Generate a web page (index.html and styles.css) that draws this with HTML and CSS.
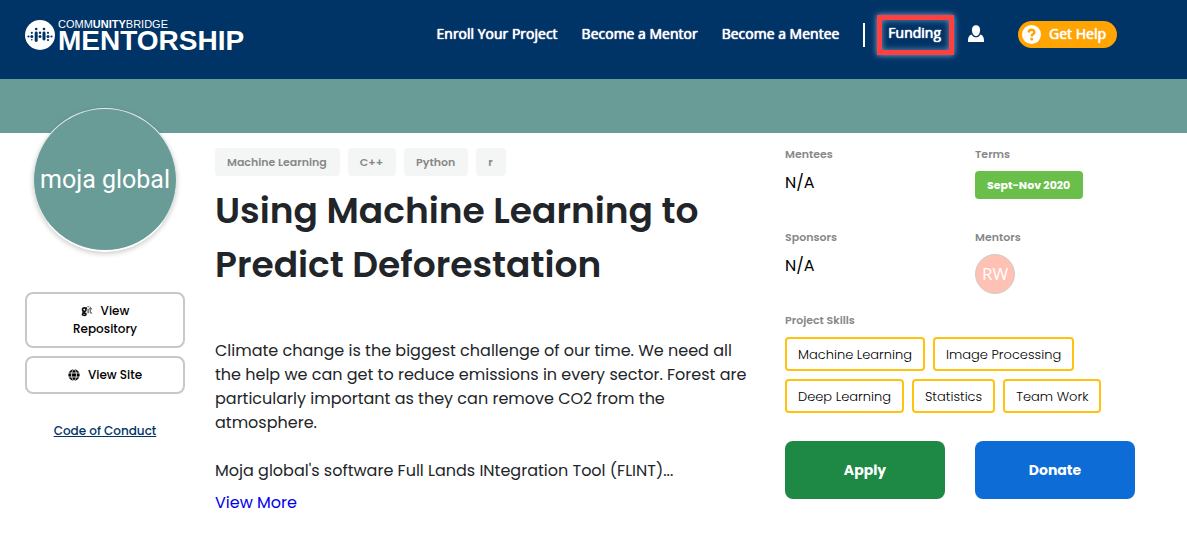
FILE: index.html
```html
<!DOCTYPE html>
<html lang="en">
<head>
<meta charset="utf-8">
<meta name="viewport" content="width=device-width, initial-scale=1">
<title>CommunityBridge Mentorship</title>
<link rel="stylesheet" href="styles.css">
</head>
<body>
<header class="topbar">
  <a class="brand" href="#">
    <svg class="brand-mark" viewBox="0 0 30 30" aria-hidden="true">
      <circle cx="15" cy="15" r="15" fill="#fff"/>
      <g fill="#003366">
        <circle cx="3.5" cy="16.5" r="1.1"/><circle cx="6.8" cy="16.5" r="1.5"/><circle cx="6.8" cy="12.8" r="1.1"/><circle cx="6.8" cy="19.8" r="0.8"/>
        <rect x="9.700" y="11.500" width="3" height="10.500" rx="1.400"/><circle cx="11.200" cy="9" r="1.300"/>
        <circle cx="15" cy="16.500" r="1.500"/><circle cx="15" cy="12.800" r="1.200"/>
        <rect x="17.500" y="11.500" width="3" height="9" rx="1.400"/><circle cx="19" cy="9" r="1.300"/>
        <circle cx="23" cy="16.500" r="1.500"/><circle cx="23" cy="12.800" r="1.100"/><circle cx="23" cy="20" r="1.100"/>
        <circle cx="26.500" cy="16.500" r="1.100"/>
      </g>
    </svg>
    <span class="brand-text">
      <span class="brand-top">COMM<b>UNITY</b>BRIDGE</span>
      <span class="brand-name">MENTORSHIP</span>
    </span>
  </a>
  <nav class="nav">
    <a class="nav-link" href="#">Enroll Your Project</a>
    <a class="nav-link" href="#">Become a Mentor</a>
    <a class="nav-link" href="#">Become a Mentee</a>
    <span class="divider"></span>
    <a class="nav-link funding" href="#">Funding</a>
    <a class="user" href="#" aria-label="Account">
      <svg viewBox="0 0 16 18" fill="#fff" aria-hidden="true">
        <path d="M8 0.200C10.600 0.200 12.100 2.100 12.100 4.900C12.100 7.900 10.300 11 8 11C5.700 11 3.900 7.900 3.900 4.900C3.900 2.100 5.400 0.200 8 0.200Z"/>
        <path d="M3.600 9.500C4.700 11.500 6.200 12.300 8 12.300S11.300 11.500 12.400 9.500C15 10.300 16 12.500 16 15.500V17H0V15.500C0 12.500 1 10.300 3.600 9.500Z"/>
      </svg>
    </a>
    <button class="help" type="button">
      <svg viewBox="0 0 19 19" aria-hidden="true">
        <circle cx="9.500" cy="9.500" r="9.500" fill="#fff"/>
        <path d="M6.700 7.500C6.700 5.700 8 4.800 9.600 4.800S12.400 5.700 12.400 7.200C12.400 9.100 9.700 9 9.700 11.400" fill="none" stroke="#ffa400" stroke-width="2.400"/>
        <circle cx="9.700" cy="13.900" r="1.500" fill="#ffa400"/>
      </svg>
      Get Help
    </button>
  </nav>
</header>
<div class="banner"></div>
<main class="page">
  <aside class="side">
    <div class="logo">moja global</div>
    <div class="side-actions">
      <a class="outline" href="#">
        <svg class="git" viewBox="0 0 12 13" fill="none" aria-hidden="true">
          <g stroke="#111" stroke-width="1.700"><circle cx="3" cy="5" r="1.900"/><path d="M4.500 3.400H6M2 7.500C0.500 9 5 8 5 9.700C5 11.800 1 11.700 1 10C1 9 2.200 8.800 3.400 8.600"/></g>
          <path d="M7.200 4V9" stroke="#666" stroke-width="1.500"/><path d="M7.200 1.200V2.500" stroke="#666" stroke-width="1.500"/>
          <path d="M9.600 2V7.500C9.600 8.600 10.300 8.800 11.500 8.500M8.300 4H11.500" stroke="#777" stroke-width="1.500"/>
        </svg>View Repository</a>
      <a class="outline" href="#">
        <svg class="globe" viewBox="0 0 12 12" aria-hidden="true">
          <circle cx="6" cy="6" r="5.700" fill="#000"/>
          <path d="M0 4H12M0 8H12M6 0C2.700 3 2.700 9 6 12C9.300 9 9.300 3 6 0" fill="none" stroke="#fff" stroke-width="0.800"/>
        </svg>View Site</a>
    </div>
    <a class="conduct" href="#">Code of Conduct</a>
  </aside>
  <article class="detail">
    <ul class="tags">
      <li>Machine Learning</li><li>C++</li><li>Python</li><li>r</li>
    </ul>
    <h1 class="title">Using Machine Learning to Predict Deforestation</h1>
    <p class="text">Climate change is the biggest challenge of our time. We need all the help we can get to reduce emissions in every sector. Forest are particularly important as they can remove CO2 from the atmosphere.</p>
    <p class="text">Moja global's software Full Lands INtegration Tool (FLINT)...</p>
    <a class="more" href="#">View More</a>
  </article>
  <section class="facts">
    <div class="fact"><h2>Mentees</h2><p>N/A</p></div>
    <div class="fact"><h2>Terms</h2><span class="term">Sept-Nov 2020</span></div>
    <div class="fact"><h2>Sponsors</h2><p>N/A</p></div>
    <div class="fact"><h2>Mentors</h2><span class="mentor">RW</span></div>
    <div class="fact wide"><h2>Project Skills</h2>
      <ul class="skills">
        <li>Machine Learning</li><li>Image Processing</li><li>Deep Learning</li><li>Statistics</li><li>Team Work</li>
      </ul>
    </div>
    <button class="cta apply" type="button">Apply</button>
    <button class="cta donate" type="button">Donate</button>
  </section>
</main>
</body>
</html>
```
FILE: styles.css
```css
* { box-sizing: border-box; }
body { margin: 0; background: #fff; color: #212529; font: 400 16px/24px Poppins, Inter, sans-serif; }
h1, h2, p, ul { margin: 0; padding: 0; }
ul { list-style: none; display: flex; flex-wrap: wrap; gap: 8px; }
a { text-decoration: none; }

.topbar { display: flex; justify-content: space-between; align-items: flex-start; background: #003366; padding: 15px 70px 24px 25px; font-family: "Open Sans", sans-serif; }
.brand { display: flex; gap: 3px; color: #fff; font-family: "Liberation Sans", Arial, sans-serif; padding-top: 4px; }
.brand-mark { width: 30px; height: 30px; margin-top: 1px; }
.brand-text { display: flex; flex-direction: column; }
.brand-top { font-size: 11px; line-height: 10px; }
.brand-name { font-size: 28px; font-weight: 700; line-height: 24px; }
.nav { display: flex; align-items: center; height: 40px; }
.nav-link, .help { color: #fff; font: 400 14px/20px "Open Sans", sans-serif; text-shadow: 0 0 1px #fff, 0 0 1px #fff; }
.nav-link { margin: 0 24px 2px 0; }
.divider { width: 2px; height: 24px; background: #fff; margin-right: 12px; }
.funding { border: 5px solid #ff4040; padding: 3px 8px 7px 6px; margin: 0 13px 0 0; box-shadow: 0 0 6px #8ab0d8, inset 0 0 6px #6f93b8; }
.user { display: flex; margin: 0 33px 2px 0; }
.user svg { width: 18px; height: 18px; }
.help { display: flex; align-items: center; gap: 8px; height: 27px; margin-bottom: 2px; padding: 0 11px 0 4px; border: 0; border-radius: 14px; background: #ffa400; }
.help svg { width: 19px; height: 19px; }
.banner { height: 54px; background: #699b97; }

.page { display: grid; grid-template-columns: repeat(6, minmax(0, 1fr)); gap: 30px; padding: 0 52px 42px 25px; }
.side { display: flex; flex-direction: column; align-items: center; margin-top: -25px; }
.logo { display: grid; place-items: center; width: 144px; height: 144px; border: 1px solid #e4ecea; border-bottom: 2px solid #fff; border-radius: 50%; background: #699b97; color: #fff; font: 25px/30px Roboto, sans-serif; white-space: nowrap; box-shadow: 0 2px 5px rgba(0, 0, 0, .2); }
.side-actions { display: grid; gap: 8px; width: 100%; margin-top: 40px; }
.outline { border: 2px solid #c8c8c8; border-radius: 8px; padding: 8px 36px; text-align: center; color: #000; font-size: 12px; font-weight: 500; line-height: 18px; }
.outline svg { width: 12px; height: 12px; margin-right: 8px; vertical-align: -2px; }
.conduct { margin-top: 27px; color: #003366; font-size: 12px; font-weight: 500; line-height: 20px; text-decoration: underline; }

.detail { grid-column: span 3; padding-top: 15px; }
.tags li { background: #f4f6f6; color: #888; border-radius: 4px; padding: 5px 13px 5px 12px; font-size: 11px; font-weight: 600; line-height: 18px; }
.title { margin: 8px 0 47px; font-size: 36px; font-weight: 600; line-height: 54px; }
.text { margin-bottom: 24px; }
.text + .more { display: block; margin-top: -16px; color: #0000ee; }

.facts { grid-column: span 2; display: grid; grid-template-columns: 1fr 1fr; grid-template-rows: 83px 83px auto auto; column-gap: 30px; align-content: start; padding-top: 12px; }
.fact h2 { color: #888; font-size: 11px; font-weight: 600; line-height: 18px; margin-bottom: 8px; }
.fact p { color: #000; }
.term { display: inline-block; background: #6abf4b; color: #fff; border-radius: 4px; padding: 5px 13px 5px 12px; font-size: 11px; font-weight: 700; line-height: 18px; }
.mentor { display: grid; place-items: center; width: 40px; height: 40px; border: 1px solid #ccc; border-radius: 50%; background: #ffc1b3; color: #fff; font: 17px/20px "Open Sans", sans-serif; }
.wide { grid-column: span 2; margin-bottom: 28px; }
.skills li { border: 2px solid #ffc20e; border-radius: 4px; padding: 7px 11px 5px; color: #000; font-size: 13px; font-weight: 300; line-height: 18px; }
.cta { height: 58px; border: 0; border-radius: 8px; color: #fff; font: 700 14px/20px Poppins, Inter, sans-serif; }
.apply { background: #1d8944; }
.donate { background: #0d6cd6; }
```
